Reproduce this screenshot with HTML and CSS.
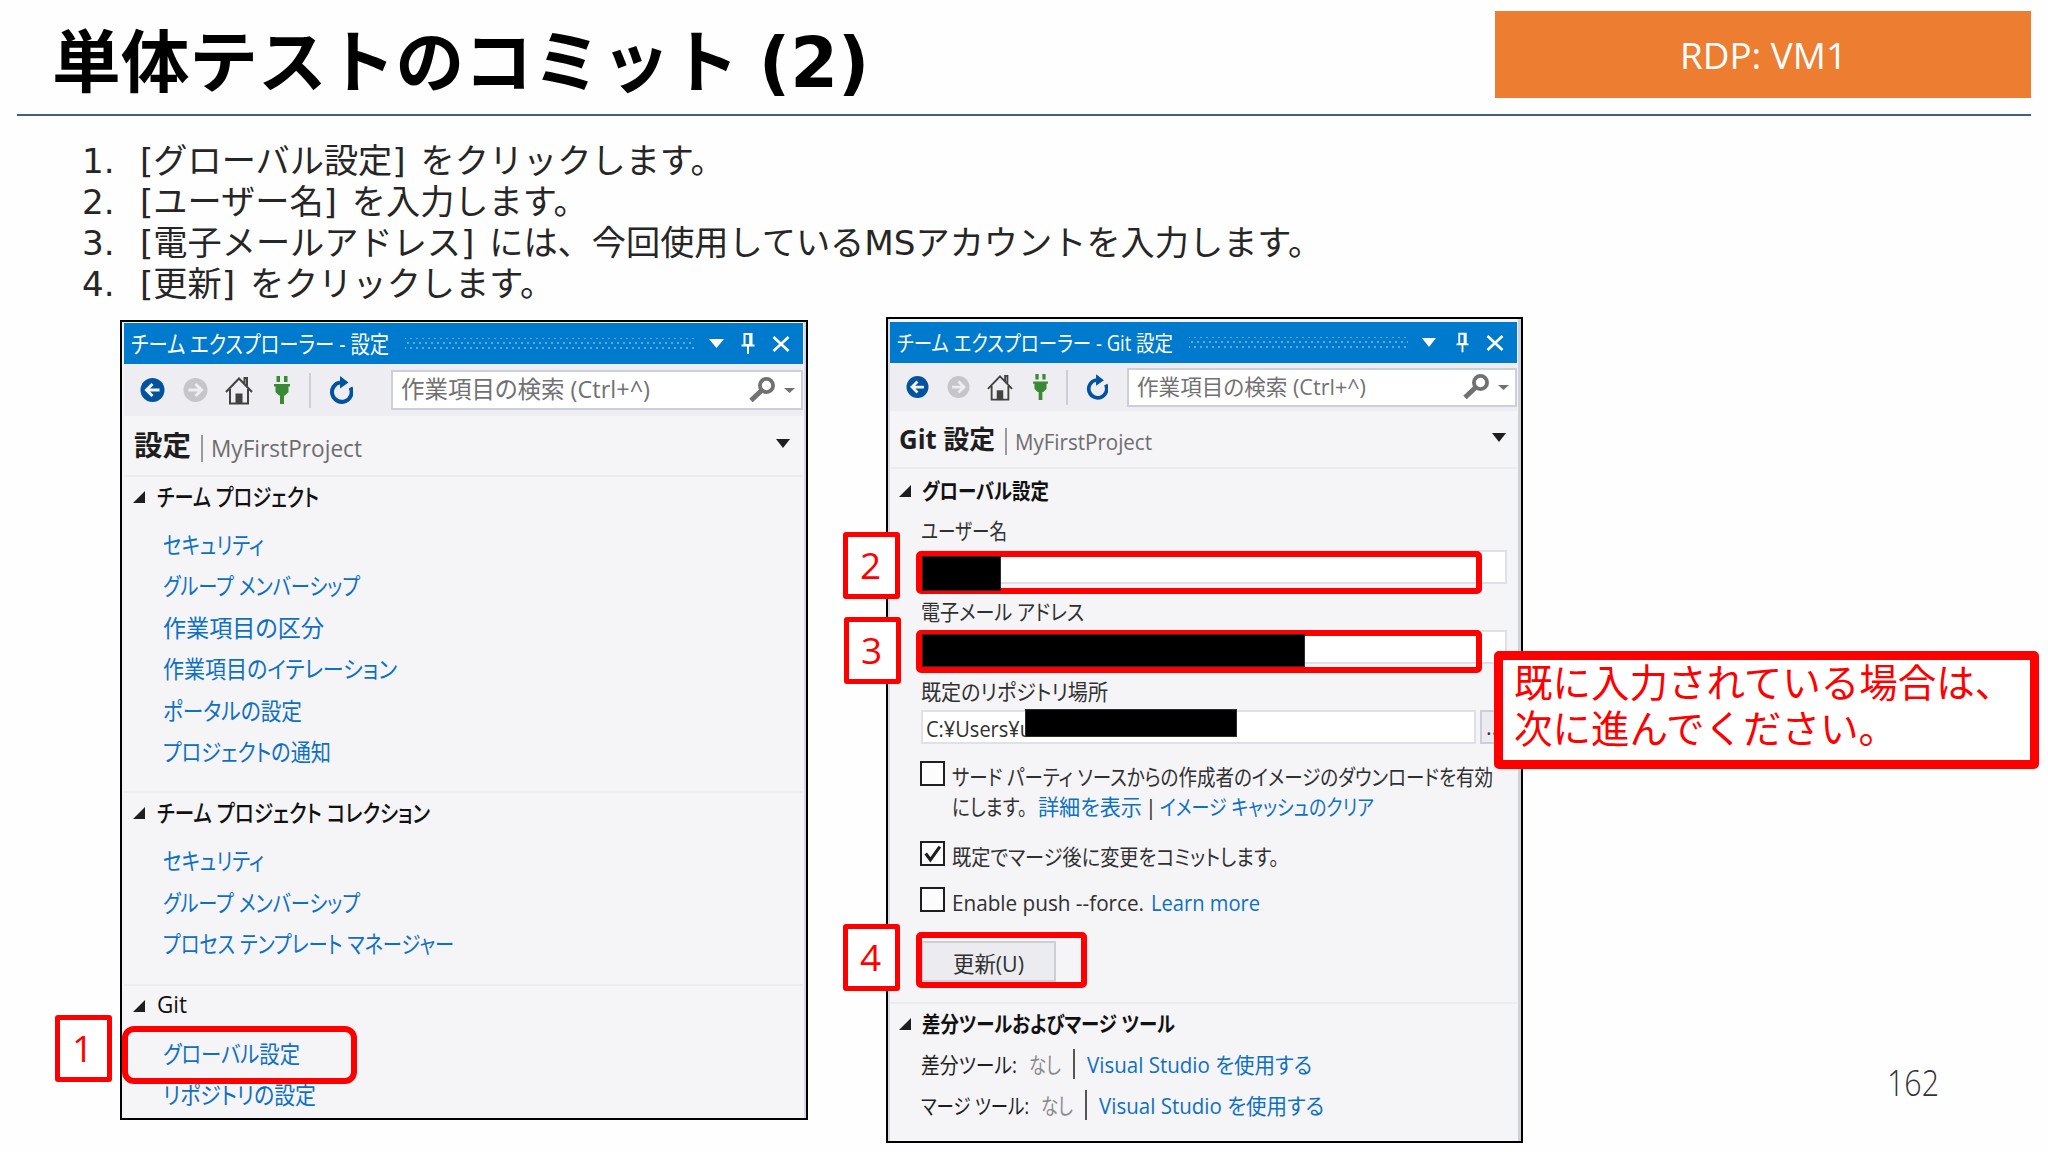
FILE: index.html
```
<!DOCTYPE html>
<html lang="ja">
<head>
    <meta charset="UTF-8">
    <meta name="viewport" content="width=device-width, initial-scale=1.0">
    <title>単体テストのコミット (2)</title>
    <link rel="stylesheet" href="styles.css">
</head>
<body>

<!-- shared icons -->
<svg class="icon-defs" width="0" height="0">
    <symbol id="i-down" viewBox="0 0 14 8" preserveAspectRatio="none"><path d="M0 0h14L7 8z" fill="currentColor"/></symbol>
    <symbol id="i-pin" viewBox="0 0 14 22"><path d="M3.5 1h7v11h-7zM0.5 12.5h13M7 12.5V21M9.2 1v11" fill="none" stroke="currentColor" stroke-width="2"/></symbol>
    <symbol id="i-close" viewBox="0 0 18 16"><path d="M1.5 1l15 14M16.5 1l-15 14" stroke="currentColor" stroke-width="2.6"/></symbol>
    <symbol id="i-back" viewBox="0 0 24 24"><circle cx="12" cy="12" r="12" fill="currentColor"/><path d="M19 12H7M12 6l-6 6 6 6" fill="none" stroke="#f4f4f8" stroke-width="3"/></symbol>
    <symbol id="i-forward" viewBox="0 0 24 24"><circle cx="12" cy="12" r="12" fill="currentColor"/><path d="M5 12h12M12 6l6 6-6 6" fill="none" stroke="#eeeef2" stroke-width="3"/></symbol>
    <symbol id="i-home" viewBox="0 0 28 29"><path d="M1 16L14 2.5 27 16M5 13v14.5h18V13M19.5 8V2h2.5v8" fill="none" stroke="#424242" stroke-width="2"/><path d="M10.500 17.500h7V28h-7z" fill="#424242"/></symbol>
    <symbol id="i-plug" viewBox="0 0 16 28"><path d="M2.500 0h3.500v6H2.500zM10 0h3.500v6H10zM0 8h16v2.500h-1.500V16L11 19.500H10V28H6v-8.500H5L1.500 16v-5.500H0z" fill="#388a34"/></symbol>
    <symbol id="i-refresh" viewBox="0 0 24 28"><path d="M21.500 11.500A9.800 9.800 0 1 1 11 6.400" fill="none" stroke="#00539c" stroke-width="4"/><path d="M11 0l8.500 6.500-8.500 6z" fill="#00539c"/></symbol>
    <symbol id="i-search" viewBox="0 0 26 25"><circle cx="17.500" cy="8.500" r="6.600" fill="none" stroke="#717171" stroke-width="3.800"/><path d="M12.500 13.500L2 23.500" stroke="#717171" stroke-width="5"/></symbol>
    <symbol id="i-expand" viewBox="0 0 12 12"><path d="M12 0v12H0z" fill="#1e1e1e"/></symbol>
</svg>

<div class="slide">
    <header class="slide-header">
        <h1>単体テストのコミット (2)</h1>
        <div class="vm-badge"><span class="fit" data-width="167">RDP: VM1</span></div>
    </header>

    <ol class="steps">
        <li><span class="num">1.</span><span>[グローバル設定] をクリックします。</span></li>
        <li><span class="num">2.</span><span>[ユーザー名] を入力します。</span></li>
        <li><span class="num">3.</span><span>[電子メールアドレス] には、今回使用しているMSアカウントを入力します。</span></li>
        <li><span class="num">4.</span><span>[更新] をクリックします。</span></li>
    </ol>

    <main class="windows">
        <section class="panel panel-settings">
            <div class="titlebar">
                <span class="fit" data-width="258">チーム エクスプローラー - 設定</span>
                <span class="grip"></span>
                <svg class="t-down"><use href="#i-down"/></svg>
                <svg class="t-pin"><use href="#i-pin"/></svg>
                <svg class="t-close"><use href="#i-close"/></svg>
            </div>
            <div class="toolbar">
                <svg class="nav back"><use href="#i-back"/></svg>
                <svg class="nav forward"><use href="#i-forward"/></svg>
                <svg class="home"><use href="#i-home"/></svg>
                <svg class="plug"><use href="#i-plug"/></svg>
                <span class="divider"></span>
                <svg class="refresh"><use href="#i-refresh"/></svg>
                <div class="search">
                    <span class="fit" data-width="249">作業項目の検索 (Ctrl+^)</span>
                    <svg class="glass"><use href="#i-search"/></svg>
                    <svg class="more"><use href="#i-down"/></svg>
                </div>
            </div>
            <div class="page-title">
                <strong class="fit" data-width="57">設定</strong>
                <span class="bar"></span>
                <span class="project fit" data-width="151">MyFirstProject</span>
                <svg class="title-down"><use href="#i-down"/></svg>
            </div>

            <div class="group">
                <h2><svg><use href="#i-expand"/></svg><span class="fit" data-width="162">チーム プロジェクト</span></h2>
                <ul>
                    <li><a class="fit" data-width="101">セキュリティ</a></li>
                    <li><a class="fit" data-width="197">グループ メンバーシップ</a></li>
                    <li><a class="fit" data-width="161">作業項目の区分</a></li>
                    <li><a class="fit" data-width="234">作業項目のイテレーション</a></li>
                    <li><a class="fit" data-width="139">ポータルの設定</a></li>
                    <li><a class="fit" data-width="168">プロジェクトの通知</a></li>
                </ul>
            </div>
            <div class="group">
                <h2><svg><use href="#i-expand"/></svg><span class="fit" data-width="273">チーム プロジェクト コレクション</span></h2>
                <ul>
                    <li><a class="fit" data-width="101">セキュリティ</a></li>
                    <li><a class="fit" data-width="197">グループ メンバーシップ</a></li>
                    <li><a class="fit" data-width="291">プロセス テンプレート マネージャー</a></li>
                </ul>
            </div>
            <div class="group">
                <h2><svg><use href="#i-expand"/></svg><span class="fit" data-width="30">Git</span></h2>
                <ul>
                    <li><a class="fit" data-width="137">グローバル設定</a></li>
                    <li><a class="fit" data-width="153">リポジトリの設定</a></li>
                </ul>
            </div>

            <div class="mark mark-global"></div>
            <div class="step-no step-1">1</div>
        </section>

        <section class="panel panel-git">
            <div class="titlebar">
                <span class="fit" data-width="276">チーム エクスプローラー - Git 設定</span>
                <span class="grip"></span>
                <svg class="t-down"><use href="#i-down"/></svg>
                <svg class="t-pin"><use href="#i-pin"/></svg>
                <svg class="t-close"><use href="#i-close"/></svg>
            </div>
            <div class="toolbar">
                <svg class="nav back"><use href="#i-back"/></svg>
                <svg class="nav forward"><use href="#i-forward"/></svg>
                <svg class="home"><use href="#i-home"/></svg>
                <svg class="plug"><use href="#i-plug"/></svg>
                <span class="divider"></span>
                <svg class="refresh"><use href="#i-refresh"/></svg>
                <div class="search">
                    <span class="fit" data-width="229">作業項目の検索 (Ctrl+^)</span>
                    <svg class="glass"><use href="#i-search"/></svg>
                    <svg class="more"><use href="#i-down"/></svg>
                </div>
            </div>
            <div class="page-title">
                <strong class="fit" data-width="96">Git 設定</strong>
                <span class="bar"></span>
                <span class="project fit" data-width="137">MyFirstProject</span>
                <svg class="title-down"><use href="#i-down"/></svg>
            </div>

            <div class="group">
                <h2><svg><use href="#i-expand"/></svg><span class="fit" data-width="127">グローバル設定</span></h2>
                <div class="form">
                    <label><span class="fit" data-width="86">ユーザー名</span></label>
                    <div class="input"></div>
                    <label><span class="fit" data-width="163">電子メール アドレス</span></label>
                    <div class="input"></div>
                    <label><span class="fit" data-width="187">既定のリポジトリ場所</span></label>
                    <div class="path-row">
                        <div class="input"><span class="fit" data-width="106">C:¥Users¥u</span></div>
                        <div class="browse">...</div>
                    </div>

                    <div class="check check-download">
                        <span class="box"></span>
                        <div>
                            <p><span class="fit" data-width="541">サード パーティ ソースからの作成者のイメージのダウンロードを有効</span></p>
                            <p class="download-links"><span class="fit" data-width="75">にします。</span><a class="fit" data-width="104">詳細を表示</a><span class="sep">|</span><a class="fit" data-width="214">イメージ キャッシュのクリア</a></p>
                        </div>
                    </div>
                    <div class="check check-merge">
                        <span class="box"><svg viewBox="0 0 20 20"><path d="M3.500 10l4.500 6L17 3.500" fill="none" stroke="#1e1e1e" stroke-width="3"/></svg></span>
                        <p><span class="fit" data-width="327">既定でマージ後に変更をコミットします。</span></p>
                    </div>
                    <div class="check check-force">
                        <span class="box"></span>
                        <p><span class="fit" data-width="192">Enable push --force.</span><a class="fit learn" data-width="109">Learn more</a></p>
                    </div>
                    <div class="update"><span class="fit" data-width="71">更新(U)</span></div>
                </div>
            </div>
            <div class="group group-tools">
                <h2><svg><use href="#i-expand"/></svg><span class="fit" data-width="253">差分ツールおよびマージ ツール</span></h2>
                <div class="tool"><span class="fit" data-width="96">差分ツール:</span><span class="none fit" data-width="32">なし</span><i></i><a class="fit" data-width="225">Visual Studio を使用する</a></div>
                <div class="tool"><span class="fit" data-width="108">マージ ツール:</span><span class="none fit" data-width="32">なし</span><i></i><a class="fit" data-width="225">Visual Studio を使用する</a></div>
            </div>

            <!-- callouts over the form -->
            <div class="mark mark-user"></div>
            <div class="mark mark-mail"></div>
            <div class="mark mark-update"></div>
            <div class="redact redact-user"></div>
            <div class="redact redact-mail"></div>
            <div class="redact redact-path"></div>
            <div class="step-no step-2">2</div>
            <div class="step-no step-3">3</div>
            <div class="step-no step-4">4</div>
            <div class="note">
                <p>既に入力されている場合は、</p>
                <p>次に進んでください。</p>
            </div>
        </section>
    </main>

    <div class="page-no"><span class="fit" data-width="52">162</span></div>
</div>

<script src="fit.js"></script>
</body>
</html>
```
FILE: styles.css
```
* {
    box-sizing: border-box;
}

body {
    margin: 0;
    background: #fefefe;
    font-family: "Open Sans", "Noto Sans CJK JP", sans-serif;
    color: #1e1e1e;
}

h1, h2, p, ol, ul {
    margin: 0;
    padding: 0;
    list-style: none;
}

svg {
    display: block;
    flex: none;
}

.icon-defs {
    position: absolute;
}

.slide {
    position: relative;
    width: 2048px;
    height: 1152px;
    padding: 0 17px;
    overflow: hidden;
}

.fit {
    display: inline-block;
    flex: none;
    white-space: nowrap;
    transform-origin: left center;
    font-feature-settings: "palt";
}

/* header */
.slide-header {
    display: flex;
    justify-content: space-between;
    align-items: flex-start;
    height: 116px;
    padding: 11px 0 0 35px;
    border-bottom: 2px solid #44607c;
}

.slide-header h1 {
    padding-top: 3px;
    font-family: "DejaVu Sans", "Noto Sans CJK JP", sans-serif;
    font-size: 68.7px;
    line-height: 98px;
    font-weight: bold;
    word-spacing: -4px;
    color: #000;
    white-space: nowrap;
}

.vm-badge {
    display: flex;
    justify-content: center;
    align-items: center;
    width: 536px;
    height: 87px;
    background: #ed7d31;
    color: #fff;
    font-size: 37px;
}

/* steps */
.steps {
    padding: 25px 0 0 65px;
    height: 201px;
    font-family: "DejaVu Sans", "Noto Sans CJK JP", sans-serif;
    font-size: 34.2px;
    line-height: 41px;
    word-spacing: 4px;
    color: #262626;
}

.steps li {
    display: flex;
    white-space: nowrap;
}

.steps .num {
    width: 58px;
}

/* windows */
.windows {
    display: flex;
    align-items: flex-start;
    gap: 78px;
    padding-left: 103px;
}

.panel {
    position: relative;
    flex: none;
    border: 2px solid #000;
    background: #f5f4f7;
}

.panel-settings {
    width: 688px;
    height: 800px;
    margin-top: 3px;
    padding: 1px 3px 0 2px;
    font-size: 23.5px;
    box-shadow: inset -2px 0 #d5d6e4;
}

.panel-git {
    width: 637px;
    height: 826px;
    padding: 3px 4px 0 2px;
    font-size: 21.5px;
    box-shadow: inset -3px 0 #cfd0de, inset 2px 0 #dcdce6;
}

.titlebar {
    display: flex;
    align-items: center;
    height: 41px;
    padding: 0 13px 0 7px;
    background: #007acc;
    color: #fff;
}

.titlebar .fit {
    padding-bottom: 2px;
}

.grip {
    flex: 1;
    height: 12px;
    margin: 0 14px 0 16px;
    background-image: radial-gradient(circle, #59a9e0 1px, transparent 1.4px), radial-gradient(circle, #59a9e0 1px, transparent 1.4px);
    background-size: 6px 10px;
    background-position: 0 0, 3px 5px;
}

.t-down {
    width: 15px;
    height: 9px;
    margin-right: 17px;
}

.t-pin {
    width: 14px;
    height: 22px;
    margin-right: 17px;
}

.t-close {
    width: 18px;
    height: 16px;
}

.toolbar {
    display: flex;
    align-items: center;
    height: 52px;
    padding-left: 16px;
    background: #eeeef2;
}

.nav {
    width: 25px;
    height: 24px;
    margin-right: 18px;
}

.back {
    color: #00539c;
}

.forward {
    color: #c6c6ca;
}

.home {
    width: 28px;
    height: 29px;
    margin: 0 21px 0 -1px;
}

.plug {
    width: 16px;
    height: 28px;
    margin-right: 19px;
}

.divider {
    width: 2px;
    height: 35px;
    margin-right: 18px;
    background: #ccced8;
}

.refresh {
    width: 24px;
    height: 28px;
}

.search {
    display: flex;
    align-items: center;
    flex: 1;
    height: 40px;
    margin-left: 38px;
    padding: 0 6px 0 8px;
    border: 2px solid #ccceda;
    background: #fff;
    color: #717171;
}

.search .fit {
    padding-bottom: 4px;
}

.glass {
    width: 26px;
    height: 25px;
    margin: -2px 9px 0 auto;
}

.more {
    width: 11px;
    height: 5px;
    color: #717171;
}

.page-title {
    display: flex;
    align-items: center;
    height: 59px;
    padding: 0 13px 0 10px;
}

.page-title strong {
    padding-bottom: 3px;
    font-size: 28px;
}

.page-title .bar {
    width: 2px;
    height: 27px;
    margin: 5px 8px 0 10px;
    background: #9a9a9a;
}

.project {
    margin-top: 4px;
    color: #6d6d6d;
}

.title-down {
    width: 14px;
    height: 9px;
    margin: -4px 0 0 auto;
}

/* groups */
.group {
    padding-bottom: 18px;
    border-top: 2px solid #ececf0;
}

.group h2 {
    display: flex;
    align-items: center;
    height: 40px;
    padding-left: 9px;
    font-size: inherit;
    font-weight: 500;
    color: #111;
}

.group h2 svg {
    width: 12px;
    height: 12px;
    margin-right: 12px;
}

.group h2 .fit {
    padding-bottom: 3px;
}

.group ul {
    padding: 8px 0 0 38.5px;
}

.group li {
    height: 41.4px;
    line-height: 41.4px;
}

a {
    color: #0e70c0;
}

/* git settings window */
.panel-git .titlebar {
    padding-right: 13px;
}

.panel-git .t-down {
    width: 14px;
    margin-right: 20px;
}

.panel-git .t-pin {
    width: 13px;
}

.panel-git .toolbar {
    height: 48px;
}

.panel-git .nav {
    width: 23px;
    height: 22px;
}

.panel-git .home {
    width: 26px;
    height: 27px;
    margin-right: 20px;
}

.panel-git .plug {
    width: 15px;
    height: 26px;
    margin-right: 18px;
}

.panel-git .refresh {
    width: 22px;
    height: 26px;
}

.panel-git .search {
    height: 39px;
    margin-left: 19px;
}

.panel-git .page-title {
    height: 56px;
    padding: 0 11px 0 9px;
}

.panel-git .page-title strong {
    font-size: 26px;
}

.panel-git .group {
    padding-bottom: 20px;
}

.panel-git .group h2 {
    height: 44px;
    font-weight: bold;
}

.panel-git .group h2 svg {
    margin-right: 11px;
}

.form {
    padding-left: 31px;
    color: #303030;
}

.form label {
    display: block;
    height: 36px;
    margin-top: 10px;
    line-height: 36px;
}

.form label:first-child {
    height: 37px;
    margin-top: 0;
}

.input {
    width: 586px;
    height: 34px;
    padding-left: 3px;
    border: 2px solid #e0e1e6;
    background: #fff;
    line-height: 34px;
}

.path-row {
    display: flex;
    gap: 4px;
}

.path-row .input {
    width: 555px;
}

.browse {
    width: 27px;
    height: 34px;
    padding-left: 4px;
    border: 2px solid #ccceda;
    background: #ececf0;
    line-height: 30px;
}

.check {
    display: flex;
    gap: 7px;
    margin-left: -1px;
    line-height: 30px;
}

.check p {
    display: flex;
    height: 30px;
}

.box {
    flex: none;
    width: 25px;
    height: 25px;
    margin-top: -1px;
    border: 2px solid #1e1e1e;
    background: #fcfcfc;
}

.check-download {
    margin-top: 18px;
}

.download-links a:first-of-type {
    margin-left: 11px;
}

.sep {
    width: 18px;
    text-align: center;
}

.check-merge {
    margin-top: 20px;
}

.check-force {
    margin-top: 16px;
}

.learn {
    margin-left: 7px;
}

.update {
    display: flex;
    align-items: center;
    width: 135px;
    height: 41px;
    margin-top: 23px;
    padding: 1px 0 0 30px;
    border: 2px solid #ccceda;
    background: #ececf0;
}

.panel-git .group-tools h2 {
    height: 40px;
}

.tool {
    display: flex;
    align-items: center;
    height: 41px;
    padding: 0 0 2px 31px;
}

.tool .none {
    position: relative;
    left: 12px;
    color: #8a8a8a;
}

.tool i {
    width: 2px;
    height: 30px;
    margin: 0 12px 0 24px;
    background: #555;
}

/* red annotations */
.mark {
    position: absolute;
    border: 6px solid #f00;
    border-radius: 5px;
}

.mark-global {
    left: 0;
    top: 704px;
    width: 235px;
    height: 58px;
    border-radius: 12px;
}

.mark-user,
.mark-mail {
    left: 28px;
    width: 566px;
    height: 43px;
}

.mark-user {
    top: 232px;
}

.mark-mail {
    top: 311px;
}

.mark-update {
    left: 28px;
    top: 613px;
    width: 171px;
    height: 56px;
}

.redact {
    position: absolute;
    border: 1px solid #2b2b2b;
    background: #000;
}

.redact-user {
    left: 34px;
    top: 237px;
    width: 79px;
    height: 35px;
}

.redact-mail {
    left: 34px;
    top: 315px;
    width: 383px;
    height: 33px;
}

.redact-path {
    left: 137px;
    top: 390px;
    width: 212px;
    height: 28px;
}

.step-no {
    position: absolute;
    display: flex;
    justify-content: center;
    align-items: center;
    width: 57px;
    height: 67px;
    padding: 0 2px 2px 0;
    border: 5px solid #f00;
    border-radius: 3px;
    background: #fff;
    color: #f00;
    font-size: 37px;
}

.step-1 {
    left: -67px;
    top: 693px;
}

.step-2 {
    left: -45px;
    top: 213px;
}

.step-3 {
    left: -44px;
    top: 298px;
}

.step-4 {
    left: -45px;
    top: 605px;
}

.note {
    position: absolute;
    left: 606px;
    top: 332px;
    width: 545px;
    height: 118px;
    padding-left: 11px;
    border: 9px solid #f00;
    border-radius: 5px;
    background: #fff;
    color: #f00;
    font-family: "Noto Sans CJK JP", sans-serif;
    font-size: 38.5px;
    line-height: 46px;
    white-space: nowrap;
}

.note p {
    position: relative;
    top: -3px;
}

.page-no {
    position: absolute;
    left: 1887px;
    top: 1056px;
    font-size: 37px;
    font-weight: 300;
    line-height: 52px;
    color: #333;
}
```
FILE: fit.js
```
document.querySelectorAll('.fit').forEach((el) => {
    const natural = el.getBoundingClientRect().width;
    const target = Number(el.dataset.width);
    const margin = parseFloat(getComputedStyle(el).marginRight) || 0;
    el.style.transform = `scaleX(${target / natural})`;
    el.style.marginRight = `${margin + target - natural}px`;
});
```
